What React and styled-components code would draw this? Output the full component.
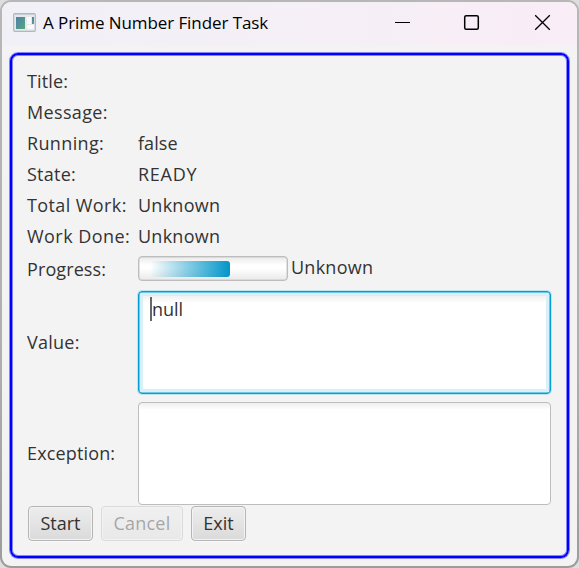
import React from "react";
import styled, { createGlobalStyle, css } from "styled-components";

const Global = createGlobalStyle`
  * { box-sizing: border-box; }
  html, body { margin: 0; background: #dedede; }
  body { font-family: "Open Sans", "Noto Sans", sans-serif; overflow: hidden; }
`;

const Window = styled.div`
  width: 579px;
  height: 568px;
  padding: 2px;
  border-radius: 11px;
  background: linear-gradient(#b7b7b7, #b0b0b0 60%, #9c9c9c);
`;

const Surface = styled.div`
  height: 564px;
  border-radius: 9px;
  background: #f3f3f3;
  overflow: hidden;
`;

const TitleBar = styled.header`
  display: flex;
  align-items: center;
  height: 43px;
  padding-left: 11px;
  background: linear-gradient(90deg, #f1f0f7, #f5eff7 50%, #f9edf6);
`;

const AppIcon = styled.svg`
  width: 23px;
  height: 19px;
  margin-top: -2px;
`;

const Text = styled.span`
  display: block;
  white-space: pre;
  width: max-content;
  font-size: 18px;
  line-height: 24px;
  color: ${(p) => p.$color || "#333"};
  letter-spacing: ${(p) => p.$track || 0}px;
`;

const Caption = styled(Text)`
  margin: -2px 0 0 7px;
  font-size: 17px;
`;

const WindowControls = styled.svg`
  width: 158px;
  height: 18px;
  margin: -3px 25px 0 auto;
`;

const Frame = styled.main`
  width: 559px;
  height: 505px;
  margin: 8px 0 0 8px;
  padding: 10px 13px 0 15px;
  border: 2px solid #0000ff;
  border-radius: 8px;
  box-shadow: 0 0 0 1px #8383fb, inset 0 0 0 1px #8383fb;
`;

const Fields = styled.div`
  display: grid;
  grid-template-columns: 108px 413px;
  column-gap: 3px;
  grid-template-rows: repeat(6, 31px) 35px 111px 111px;
  align-items: center;
`;

const ProgressRow = styled.div`
  display: flex;
  gap: 3px;
  align-items: center;
  > ${Text} { margin-top: -4px; }
`;

const Track = styled.div`
  width: 150px;
  height: 25px;
  padding: 4px 0 0 11px;
  border: 1px solid #bdbdbd;
  border-radius: 4px;
  background: linear-gradient(#eaeaea, #fff 35%, #fff 50%, #e9e9e9);
  box-shadow: inset 0 0 0 0.5px #c9c9c9;
`;

const Bar = styled.div`
  width: 80px;
  height: 16px;
  border-radius: 3px;
  background: linear-gradient(90deg, rgba(0, 150, 201, 0), #0096c9);
`;

const Area = styled.div`
  width: 413px;
  height: 103px;
  margin-top: 2px;
  padding: 5px 0 0 11px;
  border: 1px solid #bdbdbd;
  border-radius: 4px;
  background: linear-gradient(#efefef, #fff 7px);
  ${(p) =>
    p.$focused &&
    css`
      border-color: #039ed3;
      background: linear-gradient(#f1f1f1 4px, #fff 11px);
      box-shadow: 0 0 0 1px #bfe3ef, inset 0 0 0 0.5px #039ed3, inset 0 0 0 4px #d9f0f8;
    `}
`;

const Value = styled.div`
  display: flex;
  border-left: 2px solid #666;
  height: 24px;
`;

const Actions = styled.div`
  display: flex;
  gap: 8px;
  margin: -2px 0 0 1px;
`;

const Button = styled.button`
  display: flex;
  justify-content: center;
  align-items: center;
  width: ${(p) => p.$width}px;
  height: 35px;
  padding: 0 0 1px;
  font: inherit;
  border: 1px solid #b5b5b5;
  border-radius: 4px;
  background: linear-gradient(#ededed, #dadada);
  box-shadow: inset 0 0 0 1px #f3f3f3, 0 1px 0 #f9f9f9;
  &:disabled { opacity: 0.4; }
`;

const rows = [
  { name: "Title:", track: 0.15 },
  { name: "Message:", track: 0.35 },
  { name: "Running:", track: 0.35, value: "false", valueTrack: 0.05 },
  { name: "State:", track: 0.25, value: "READY", valueTrack: 0.75 },
  { name: "Total Work:", track: 0.4, value: "Unknown", valueTrack: 0.25 },
  { name: "Work Done:", track: 0.45, value: "Unknown", valueTrack: 0.25 },
];

export default function App() {
  return (
    <>
      <Global />
      <Window>
        <Surface>
          <TitleBar>
            <AppIcon viewBox="0 0 23 19">
              <defs>
                <linearGradient id="pane" x1="0" y1="0" x2="1" y2="1">
                  <stop offset="0" stopColor="#4b80ad" />
                  <stop offset="1" stopColor="#5aa77b" />
                </linearGradient>
              </defs>
              <rect x=".7" y=".7" width="21.6" height="17.6" rx="1" fill="#e6e8ec" stroke="#b1b6bf" strokeWidth="1.2" />
              <path d="M1 1.5h21" stroke="#c8ccd4" />
              <path d="M3 4h9v12H3z" fill="url(#pane)" />
              <path d="M14 4h4v7h-4zM14 12h7v4h-7z" fill="#fafafa" />
              <path d="M19 4h2v7h-2z" fill="url(#pane)" />
            </AppIcon>
            <Caption $color="#000" $track={-0.08}>A Prime Number Finder Task</Caption>
            <WindowControls viewBox="0 0 158 18" fill="none" stroke="#000">
              <path d="M1 9.5h15" />
              <rect x="70.7" y="2.7" width="13.6" height="13.6" rx="1.5" strokeWidth="1.5" />
              <path d="M141.2 2.200l14.600 14.600M155.800 2.200l-14.600 14.600" strokeWidth="1.3" />
            </WindowControls>
          </TitleBar>
          <Frame>
            <Fields>
              {rows.map(({ name, track, value, valueTrack }) => (
                <React.Fragment key={name}>
                  <Text $track={track}>{name}</Text>
                  <Text $track={valueTrack}>{value}</Text>
                </React.Fragment>
              ))}
              <Text $track={0.1}>Progress:</Text>
              <ProgressRow>
                <Track><Bar /></Track>
                <Text $track={0.25}>Unknown</Text>
              </ProgressRow>
              <Text $track={0.25}>Value:</Text>
              <Area $focused><Value><Text>null</Text></Value></Area>
              <Text $track={0.15}>Exception:</Text>
              <Area />
            </Fields>
            <Actions>
              <Button $width={65}><Text>Start</Text></Button>
              <Button $width={82} disabled><Text $track={0.2}>Cancel</Text></Button>
              <Button $width={55}><Text>Exit</Text></Button>
            </Actions>
          </Frame>
        </Surface>
      </Window>
    </>
  );
}
